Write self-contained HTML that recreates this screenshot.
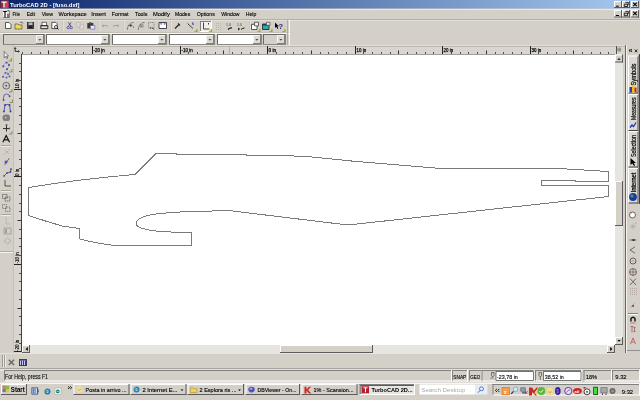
<!DOCTYPE html>
<html><head><meta charset="utf-8">
<style>
html,body{margin:0;padding:0;width:640px;height:400px;overflow:hidden;background:#D4D0C8}
svg{display:block;will-change:transform;font-family:"Liberation Sans",sans-serif}
</style></head><body>
<svg width="640" height="400" viewBox="0 0 640 400">
<rect x="0" y="0" width="640" height="400" fill="#D4D0C8" />
<defs><linearGradient id="tg" x1="0" x2="1" y1="0" y2="0"><stop offset="0" stop-color="#0A246A"/><stop offset="1" stop-color="#A6CAF0"/></linearGradient></defs>
<rect x="0" y="0" width="640" height="8.5" fill="url(#tg)" />
<rect x="0" y="9" width="640" height="1" fill="#E8E8EC"/>
<rect x="0.5" y="0.5" width="8" height="7.5" fill="#A02838" />
<rect x="5" y="1" width="3.5" height="7" fill="#D04050" />
<path d="M1.5 2.2h5M4 2.2v5.3" stroke="#fff" fill="none" stroke-width="1.3" />
<text x="10" y="6.8" font-size="6.2" fill="#fff" font-weight="bold" textLength="69.5" lengthAdjust="spacingAndGlyphs" >TurboCAD 2D - [fuso.dxf]</text>
<rect x="614" y="1" width="8" height="7" fill="#D4D0C8" />
<rect x="614" y="1" width="8" height="1" fill="#FFFFFF"/>
<rect x="614" y="1" width="1" height="7" fill="#FFFFFF"/>
<rect x="614" y="7" width="8" height="1" fill="#5C5C5C"/>
<rect x="621" y="1" width="1" height="7" fill="#5C5C5C"/>
<rect x="622" y="1" width="8" height="7" fill="#D4D0C8" />
<rect x="622" y="1" width="8" height="1" fill="#FFFFFF"/>
<rect x="622" y="1" width="1" height="7" fill="#FFFFFF"/>
<rect x="622" y="7" width="8" height="1" fill="#5C5C5C"/>
<rect x="629" y="1" width="1" height="7" fill="#5C5C5C"/>
<rect x="631" y="1" width="8" height="7" fill="#D4D0C8" />
<rect x="631" y="1" width="8" height="1" fill="#FFFFFF"/>
<rect x="631" y="1" width="1" height="7" fill="#FFFFFF"/>
<rect x="631" y="7" width="8" height="1" fill="#5C5C5C"/>
<rect x="638" y="1" width="1" height="7" fill="#5C5C5C"/>
<path d="M615.8 6.2h3" stroke="#000" fill="none" stroke-width="1" />
<path d="M624.3 4.2h3.2v2.3h-3.2z M625.3 2.3h3v2.5" stroke="#000" fill="none" stroke-width="0.8" />
<path d="M633.2 2.6l3.6 3.6M636.8 2.6l-3.6 3.6" stroke="#000" fill="none" stroke-width="1.1" />
<rect x="3" y="10.5" width="6.5" height="7" fill="#F8F8F8" />
<path d="M3 17.5h6.5v-7" stroke="#404040" fill="none" stroke-width="0.6" />
<path d="M3.2 11.5h3.6M5 11.5v6" stroke="#000" fill="none" stroke-width="1.1" />
<path d="M8 13.5v4" stroke="#000" fill="none" stroke-width="1" />
<rect x="7.5" y="10.3" width="1.2" height="1.2" fill="#000" />
<text x="12.5" y="15.8" font-size="5.6" fill="#000" font-weight="normal" textLength="7.5" lengthAdjust="spacingAndGlyphs" stroke="#000" stroke-width="0.12" >File</text>
<text x="26.7" y="15.8" font-size="5.6" fill="#000" font-weight="normal" textLength="8.3" lengthAdjust="spacingAndGlyphs" stroke="#000" stroke-width="0.12" >Edit</text>
<text x="41.7" y="15.8" font-size="5.6" fill="#000" font-weight="normal" textLength="11.3" lengthAdjust="spacingAndGlyphs" stroke="#000" stroke-width="0.12" >View</text>
<text x="58.6" y="15.8" font-size="5.6" fill="#000" font-weight="normal" textLength="28" lengthAdjust="spacingAndGlyphs" stroke="#000" stroke-width="0.12" >Workspace</text>
<text x="91.2" y="15.8" font-size="5.6" fill="#000" font-weight="normal" textLength="14.8" lengthAdjust="spacingAndGlyphs" stroke="#000" stroke-width="0.12" >Insert</text>
<text x="111.7" y="15.8" font-size="5.6" fill="#000" font-weight="normal" textLength="16.8" lengthAdjust="spacingAndGlyphs" stroke="#000" stroke-width="0.12" >Format</text>
<text x="135" y="15.8" font-size="5.6" fill="#000" font-weight="normal" textLength="12.4" lengthAdjust="spacingAndGlyphs" stroke="#000" stroke-width="0.12" >Tools</text>
<text x="153" y="15.8" font-size="5.6" fill="#000" font-weight="normal" textLength="16.8" lengthAdjust="spacingAndGlyphs" stroke="#000" stroke-width="0.12" >Modify</text>
<text x="174.9" y="15.8" font-size="5.6" fill="#000" font-weight="normal" textLength="15.4" lengthAdjust="spacingAndGlyphs" stroke="#000" stroke-width="0.12" >Modes</text>
<text x="196.8" y="15.8" font-size="5.6" fill="#000" font-weight="normal" textLength="18" lengthAdjust="spacingAndGlyphs" stroke="#000" stroke-width="0.12" >Options</text>
<text x="221.2" y="15.8" font-size="5.6" fill="#000" font-weight="normal" textLength="18.3" lengthAdjust="spacingAndGlyphs" stroke="#000" stroke-width="0.12" >Window</text>
<text x="245.7" y="15.8" font-size="5.6" fill="#000" font-weight="normal" textLength="10.6" lengthAdjust="spacingAndGlyphs" stroke="#000" stroke-width="0.12" >Help</text>
<rect x="614" y="10" width="8" height="7.5" fill="#D4D0C8" />
<rect x="614" y="10" width="8" height="1" fill="#FFFFFF"/>
<rect x="614" y="10" width="1" height="7.5" fill="#FFFFFF"/>
<rect x="614" y="16.5" width="8" height="1" fill="#5C5C5C"/>
<rect x="621" y="10" width="1" height="7.5" fill="#5C5C5C"/>
<rect x="622" y="10" width="8" height="7.5" fill="#D4D0C8" />
<rect x="622" y="10" width="8" height="1" fill="#FFFFFF"/>
<rect x="622" y="10" width="1" height="7.5" fill="#FFFFFF"/>
<rect x="622" y="16.5" width="8" height="1" fill="#5C5C5C"/>
<rect x="629" y="10" width="1" height="7.5" fill="#5C5C5C"/>
<rect x="631" y="10" width="8" height="7.5" fill="#D4D0C8" />
<rect x="631" y="10" width="8" height="1" fill="#FFFFFF"/>
<rect x="631" y="10" width="1" height="7.5" fill="#FFFFFF"/>
<rect x="631" y="16.5" width="8" height="1" fill="#5C5C5C"/>
<rect x="638" y="10" width="1" height="7.5" fill="#5C5C5C"/>
<path d="M615.8 15.5h3.2" stroke="#000" fill="none" stroke-width="1" />
<path d="M624.3 13.2h3.2v2.5h-3.2z M625.3 11.3h3v2.5" stroke="#000" fill="none" stroke-width="0.8" />
<path d="M633.2 11.6l3.6 3.6M636.8 11.6l-3.6 3.6" stroke="#000" fill="none" stroke-width="1.1" />
<rect x="0" y="19" width="640" height="1" fill="#B4B0A8"/>
<rect x="0" y="20" width="640" height="1" fill="#E2E0DA"/>
<rect x="37" y="21" width="1" height="10" fill="#CBC7BF"/>
<rect x="38" y="21" width="1" height="10" fill="#E2E0DA"/>
<rect x="62" y="21" width="1" height="10" fill="#CBC7BF"/>
<rect x="63" y="21" width="1" height="10" fill="#E2E0DA"/>
<rect x="98.5" y="21" width="1" height="10" fill="#CBC7BF"/>
<rect x="99.5" y="21" width="1" height="10" fill="#E2E0DA"/>
<rect x="123" y="21" width="1" height="10" fill="#CBC7BF"/>
<rect x="124" y="21" width="1" height="10" fill="#E2E0DA"/>
<rect x="170" y="21" width="1" height="10" fill="#CBC7BF"/>
<rect x="171" y="21" width="1" height="10" fill="#E2E0DA"/>
<rect x="249" y="21" width="1" height="10" fill="#CBC7BF"/>
<rect x="250" y="21" width="1" height="10" fill="#E2E0DA"/>
<path d="M5.5 22.5h3.5l2 2v4h-5.5z" stroke="#333" fill="#fff" stroke-width="0.8" />
<path d="M15 24h3l1 1h3v4h-7z" stroke="#665500" fill="#E8D870" stroke-width="0.7" />
<path d="M20 22.5l2 -0.5 1 1.5" stroke="#333" fill="none" stroke-width="0.6" />
<rect x="27" y="22" width="7" height="7" fill="#3A3A3A" />
<rect x="28.5" y="22.5" width="4" height="2.5" fill="#bbb" />
<rect x="29.5" y="26.5" width="2" height="1.5" fill="#000" />
<rect x="42" y="22.3" width="4.5" height="3" fill="#fff" />
<path d="M42 25.3v-3h4.5v3" stroke="#303030" fill="none" stroke-width="0.7" />
<path d="M40.8 25.5h7v3.2h-7z" stroke="#202020" fill="#B0B0B0" stroke-width="0.9" />
<rect x="41.5" y="27" width="5.6" height="0.8" fill="#F0F0F0" />
<path d="M51.8 22.3h4l1.3 1.3v5h-5.3z" stroke="#303030" fill="#fff" stroke-width="0.8" />
<circle cx="56" cy="27" r="1.5" fill="#fff" stroke="#202020" stroke-width="0.8"/>
<path d="M57.1 28.2l1.3 1.2" stroke="#000" fill="none" stroke-width="1" />
<path d="M68.3 22.3l2.6 3.8M71.1 22.3l-2.6 3.8" stroke="#303040" fill="none" stroke-width="0.7" />
<circle cx="68.2" cy="27.6" r="1.2" fill="none" stroke="#5048A8" stroke-width="0.9"/><circle cx="71.2" cy="27.6" r="1.2" fill="none" stroke="#5048A8" stroke-width="0.9"/>
<path d="M76.8 22.5h3.5v4.5h-3.5zM79.8 24.3h3.5v4.7h-3.5z" stroke="#B8B4AC" fill="#E0DED8" stroke-width="0.7" />
<path d="M87.3 23h6v5.5h-6z" stroke="none" fill="#3A3830" stroke-width="1" />
<rect x="89" y="22.2" width="2.6" height="1.3" fill="#606058" />
<rect x="90.3" y="25.5" width="4.5" height="3.7" fill="#E8E8F8" />
<path d="M90.3 25.5h4.5v3.7h-4.5z" stroke="#5858A8" fill="none" stroke-width="0.6" />
<path d="M101.8 25.8l1.8 -1.6v3.2z" stroke="none" fill="#A09C94" stroke-width="1" />
<path d="M103.3 25.8q3 -1.4 4.8 0.8" stroke="#A09C94" fill="none" stroke-width="0.9" />
<path d="M119.2 25.8l-1.8 -1.6v3.2z" stroke="none" fill="#A09C94" stroke-width="1" />
<path d="M117.7 25.8q-3 -1.4 -4.8 0.8" stroke="#A09C94" fill="none" stroke-width="0.9" />
<path d="M127.3 29.5q0.8 -6.5 6 -7" stroke="#202020" fill="none" stroke-width="0.8" stroke-dasharray="1 0.8"/>
<path d="M129.3 25.5h3M130.8 24v3" stroke="#202020" fill="none" stroke-width="0.7" />
<rect x="133" y="26.5" width="1" height="1" fill="#404040" />
<path d="M138.3 29.5q0.8 -6.5 6 -7" stroke="#202020" fill="none" stroke-width="0.8" stroke-dasharray="1 0.8"/>
<path d="M140 25h3.5M140 26.8h3.5" stroke="#303030" fill="none" stroke-width="0.6" />
<path d="M148.5 22.5h5.5v5.5h-5.5z" stroke="#606060" fill="none" stroke-width="0.6" stroke-dasharray="1 0.7"/>
<path d="M152 27.5l2 2" stroke="#111" fill="none" stroke-width="0.9" />
<rect x="150" y="27.5" width="1" height="1" fill="#303030" />
<rect x="159" y="22.5" width="7.5" height="6" fill="#fff" />
<path d="M159 22.5h7.5v6h-7.5z" stroke="#303040" fill="none" stroke-width="0.9" />
<path d="M160 23.5l1.2 1.2 1.2 -1.2zM163.5 23.5l1.2 1.2 1.2 -1.2z" stroke="none" fill="#202030" stroke-width="1" />
<path d="M175 28.5l4.5 -4.5M178 23.5l2 2" stroke="#222" fill="none" stroke-width="1.1" />
<path d="M187.5 23.5l5.5 5" stroke="#333" fill="none" stroke-width="0.9" />
<path d="M192.5 22.5l0.8 2.5" stroke="#4848A0" fill="none" stroke-width="1.2" />
<path d="M197 29v3h-3z" stroke="none" fill="#D8D050" stroke-width="1" />
<path d="M197 29v3h-3" stroke="#505030" fill="none" stroke-width="0.5" />
<rect x="200" y="21" width="12" height="11" fill="#F0EFEA" />
<rect x="200" y="21" width="12" height="1" fill="#808080"/>
<rect x="200" y="21" width="1" height="11" fill="#808080"/>
<rect x="200" y="31" width="12" height="1" fill="#FFFFFF"/>
<rect x="211" y="21" width="1" height="11" fill="#FFFFFF"/>
<path d="M203.5 22.5v6.5h6" stroke="#333" fill="none" stroke-width="0.9" />
<rect x="208" y="23" width="1" height="1.5" fill="#333" />
<path d="M211.5 29v3h-3z" stroke="none" fill="#D8D050" stroke-width="1" />
<path d="M211.5 29v3h-3" stroke="#505030" fill="none" stroke-width="0.5" />
<rect x="216" y="23" width="1" height="1" fill="#B0B0C8" />
<rect x="216" y="25" width="1" height="1" fill="#B0B0C8" />
<rect x="216" y="27" width="1" height="1" fill="#B0B0C8" />
<rect x="216" y="29" width="1" height="1" fill="#B0B0C8" />
<rect x="218" y="23" width="1" height="1" fill="#B0B0C8" />
<rect x="218" y="25" width="1" height="1" fill="#B0B0C8" />
<rect x="218" y="27" width="1" height="1" fill="#B0B0C8" />
<rect x="218" y="29" width="1" height="1" fill="#B0B0C8" />
<rect x="220" y="23" width="1" height="1" fill="#B0B0C8" />
<rect x="220" y="25" width="1" height="1" fill="#B0B0C8" />
<rect x="220" y="27" width="1" height="1" fill="#B0B0C8" />
<rect x="220" y="29" width="1" height="1" fill="#B0B0C8" />
<text x="226" y="25.5" font-size="3.5" fill="#777" font-weight="normal" stroke="#777" stroke-width="0.12" >1.0</text>
<path d="M228 29.5q2 -2 4 -1.5" stroke="#111" fill="none" stroke-width="1.1" />
<text x="237" y="25.5" font-size="3.5" fill="#777" font-weight="normal" stroke="#777" stroke-width="0.12" >1.0</text>
<path d="M238 28l1.5 1 -1.5 1M241 29.5q1.5 -1.5 3.5 -1.5" stroke="#111" fill="none" stroke-width="1" />
<path d="M251.5 24.3h5.5v5.2h-5.5z" stroke="#303030" fill="#fff" stroke-width="0.8" />
<path d="M254.5 22.3h4v3.6h-4z" stroke="#303030" fill="#F4F4F4" stroke-width="0.7" />
<path d="M260 29v3h-3z" stroke="none" fill="#D8D050" stroke-width="1" />
<path d="M260 29v3h-3" stroke="#505030" fill="none" stroke-width="0.5" />
<path d="M262.5 24h6.5v5.5h-6.5z" stroke="#203038" fill="#30A8A8" stroke-width="0.9" />
<rect x="263" y="24.3" width="5.5" height="1.2" fill="#203038" />
<path d="M266.5 22.3h3.5v3h-3.5z" stroke="#303030" fill="#E8F0F0" stroke-width="0.6" />
<path d="M272 29v3h-3z" stroke="none" fill="#D8D050" stroke-width="1" />
<path d="M272 29v3h-3" stroke="#505030" fill="none" stroke-width="0.5" />
<path d="M275 22.5v5.5l1.3 -1.2 1.2 2.2 0.8 -0.5 -1.1 -2 1.8 0z" stroke="none" fill="#000" stroke-width="1" />
<text x="278.6" y="28.6" font-size="7.5" fill="#202090" font-weight="bold" >?</text>
<path d="M285 29v3h-3z" stroke="none" fill="#D8D050" stroke-width="1" />
<path d="M285 29v3h-3" stroke="#505030" fill="none" stroke-width="0.5" />
<rect x="0" y="32" width="289" height="1" fill="#C4C0B8"/>
<rect x="0" y="33" width="289" height="1" fill="#F6F5F2"/>
<rect x="287" y="20" width="1" height="25" fill="#B0ACA4"/>
<rect x="289" y="20" width="1" height="25" fill="#F6F5F2"/>
<rect x="3" y="34" width="42" height="11" fill="#D4D0C8" />
<rect x="3" y="34" width="42" height="1" fill="#6A6864"/>
<rect x="3" y="34" width="1" height="11" fill="#6A6864"/>
<rect x="3" y="44" width="42" height="1" fill="#8A8884"/>
<rect x="44" y="34" width="1" height="11" fill="#8A8884"/>
<rect x="36" y="35" width="8" height="9" fill="#DDDAD4" />
<rect x="36" y="35" width="8" height="1" fill="#F4F4F0"/>
<rect x="36" y="35" width="1" height="9" fill="#F4F4F0"/>
<rect x="36" y="43" width="8" height="1" fill="#808080"/>
<rect x="43" y="35" width="1" height="9" fill="#808080"/>
<path d="M38.3 39h3.2l-1.6 1.7z" stroke="none" fill="#505050" stroke-width="1" />
<rect x="46" y="34" width="64" height="11" fill="#fff" />
<rect x="46" y="34" width="64" height="1" fill="#6A6864"/>
<rect x="46" y="34" width="1" height="11" fill="#6A6864"/>
<rect x="46" y="44" width="64" height="1" fill="#8A8884"/>
<rect x="109" y="34" width="1" height="11" fill="#8A8884"/>
<rect x="101" y="35" width="8" height="9" fill="#DDDAD4" />
<rect x="101" y="35" width="8" height="1" fill="#F4F4F0"/>
<rect x="101" y="35" width="1" height="9" fill="#F4F4F0"/>
<rect x="101" y="43" width="8" height="1" fill="#808080"/>
<rect x="108" y="35" width="1" height="9" fill="#808080"/>
<path d="M103.3 39h3.2l-1.6 1.7z" stroke="none" fill="#505050" stroke-width="1" />
<rect x="112" y="34" width="55" height="11" fill="#fff" />
<rect x="112" y="34" width="55" height="1" fill="#6A6864"/>
<rect x="112" y="34" width="1" height="11" fill="#6A6864"/>
<rect x="112" y="44" width="55" height="1" fill="#8A8884"/>
<rect x="166" y="34" width="1" height="11" fill="#8A8884"/>
<rect x="158" y="35" width="8" height="9" fill="#DDDAD4" />
<rect x="158" y="35" width="8" height="1" fill="#F4F4F0"/>
<rect x="158" y="35" width="1" height="9" fill="#F4F4F0"/>
<rect x="158" y="43" width="8" height="1" fill="#808080"/>
<rect x="165" y="35" width="1" height="9" fill="#808080"/>
<path d="M160.3 39h3.2l-1.6 1.7z" stroke="none" fill="#505050" stroke-width="1" />
<rect x="169" y="34" width="46" height="11" fill="#fff" />
<rect x="169" y="34" width="46" height="1" fill="#6A6864"/>
<rect x="169" y="34" width="1" height="11" fill="#6A6864"/>
<rect x="169" y="44" width="46" height="1" fill="#8A8884"/>
<rect x="214" y="34" width="1" height="11" fill="#8A8884"/>
<rect x="206" y="35" width="8" height="9" fill="#DDDAD4" />
<rect x="206" y="35" width="8" height="1" fill="#F4F4F0"/>
<rect x="206" y="35" width="1" height="9" fill="#F4F4F0"/>
<rect x="206" y="43" width="8" height="1" fill="#808080"/>
<rect x="213" y="35" width="1" height="9" fill="#808080"/>
<path d="M208.3 39h3.2l-1.6 1.7z" stroke="none" fill="#505050" stroke-width="1" />
<rect x="217" y="34" width="45" height="11" fill="#fff" />
<rect x="217" y="34" width="45" height="1" fill="#6A6864"/>
<rect x="217" y="34" width="1" height="11" fill="#6A6864"/>
<rect x="217" y="44" width="45" height="1" fill="#8A8884"/>
<rect x="261" y="34" width="1" height="11" fill="#8A8884"/>
<rect x="253" y="35" width="8" height="9" fill="#DDDAD4" />
<rect x="253" y="35" width="8" height="1" fill="#F4F4F0"/>
<rect x="253" y="35" width="1" height="9" fill="#F4F4F0"/>
<rect x="253" y="43" width="8" height="1" fill="#808080"/>
<rect x="260" y="35" width="1" height="9" fill="#808080"/>
<path d="M255.3 39h3.2l-1.6 1.7z" stroke="none" fill="#505050" stroke-width="1" />
<rect x="263" y="34" width="23" height="11" fill="#D4D0C8" />
<rect x="263" y="34" width="23" height="1" fill="#6A6864"/>
<rect x="263" y="34" width="1" height="11" fill="#6A6864"/>
<rect x="263" y="44" width="23" height="1" fill="#8A8884"/>
<rect x="285" y="34" width="1" height="11" fill="#8A8884"/>
<rect x="277" y="35" width="8" height="9" fill="#DDDAD4" />
<rect x="277" y="35" width="8" height="1" fill="#F4F4F0"/>
<rect x="277" y="35" width="1" height="9" fill="#F4F4F0"/>
<rect x="277" y="43" width="8" height="1" fill="#808080"/>
<rect x="284" y="35" width="1" height="9" fill="#808080"/>
<path d="M279.3 39h3.2l-1.6 1.7z" stroke="none" fill="#505050" stroke-width="1" />
<rect x="13" y="46" width="611" height="8.5" fill="#D9D6CF" />
<rect x="13" y="45" width="612" height="1" fill="#E2E0DA"/>
<rect x="13" y="46" width="612" height="1" fill="#BCB8B0"/>
<path d="M15.2 47.8v3.6h3.6" stroke="#000" fill="none" stroke-width="0.8" />
<path d="M14.3 48.8l0.9 -1.2 0.9 1.2M18.2 50.5l1.2 0.9 -1.2 0.9" stroke="#000" fill="none" stroke-width="0.7" />
<rect x="14" y="54" width="7" height="297.5" fill="#D9D6CF" />
<rect x="21" y="54" width="595" height="1" fill="#404040"/>
<rect x="21" y="54" width="1" height="298" fill="#404040"/>
<rect x="22" y="52" width="1" height="2" fill="#505050"/>
<rect x="31" y="52" width="1" height="2" fill="#505050"/>
<rect x="40" y="52" width="1" height="2" fill="#505050"/>
<rect x="48" y="50.5" width="1" height="3.5" fill="#333"/>
<rect x="57" y="52" width="1" height="2" fill="#505050"/>
<rect x="66" y="52" width="1" height="2" fill="#505050"/>
<rect x="75" y="52" width="1" height="2" fill="#505050"/>
<rect x="83" y="52" width="1" height="2" fill="#505050"/>
<rect x="92" y="46" width="1" height="8" fill="#222"/>
<text x="93.6" y="51.6" font-size="4.9" fill="#000" font-weight="normal" textLength="11.0" lengthAdjust="spacingAndGlyphs" stroke="#000" stroke-width="0.25" >-20 in</text>
<rect x="101" y="52" width="1" height="2" fill="#505050"/>
<rect x="110" y="52" width="1" height="2" fill="#505050"/>
<rect x="118" y="52" width="1" height="2" fill="#505050"/>
<rect x="127" y="52" width="1" height="2" fill="#505050"/>
<rect x="136" y="50.5" width="1" height="3.5" fill="#333"/>
<rect x="145" y="52" width="1" height="2" fill="#505050"/>
<rect x="153" y="52" width="1" height="2" fill="#505050"/>
<rect x="162" y="52" width="1" height="2" fill="#505050"/>
<rect x="171" y="52" width="1" height="2" fill="#505050"/>
<rect x="180" y="46" width="1" height="8" fill="#222"/>
<text x="181.6" y="51.6" font-size="4.9" fill="#000" font-weight="normal" textLength="11.0" lengthAdjust="spacingAndGlyphs" stroke="#000" stroke-width="0.25" >-10 in</text>
<rect x="188" y="52" width="1" height="2" fill="#505050"/>
<rect x="197" y="52" width="1" height="2" fill="#505050"/>
<rect x="206" y="52" width="1" height="2" fill="#505050"/>
<rect x="215" y="52" width="1" height="2" fill="#505050"/>
<rect x="223" y="50.5" width="1" height="3.5" fill="#333"/>
<rect x="232" y="52" width="1" height="2" fill="#505050"/>
<rect x="241" y="52" width="1" height="2" fill="#505050"/>
<rect x="250" y="52" width="1" height="2" fill="#505050"/>
<rect x="258" y="52" width="1" height="2" fill="#505050"/>
<rect x="267" y="46" width="1" height="8" fill="#222"/>
<text x="268.6" y="51.6" font-size="4.9" fill="#000" font-weight="normal" textLength="7.5" lengthAdjust="spacingAndGlyphs" stroke="#000" stroke-width="0.25" >0 in</text>
<rect x="276" y="52" width="1" height="2" fill="#505050"/>
<rect x="285" y="52" width="1" height="2" fill="#505050"/>
<rect x="293" y="52" width="1" height="2" fill="#505050"/>
<rect x="302" y="52" width="1" height="2" fill="#505050"/>
<rect x="311" y="50.5" width="1" height="3.5" fill="#333"/>
<rect x="320" y="52" width="1" height="2" fill="#505050"/>
<rect x="328" y="52" width="1" height="2" fill="#505050"/>
<rect x="337" y="52" width="1" height="2" fill="#505050"/>
<rect x="346" y="52" width="1" height="2" fill="#505050"/>
<rect x="355" y="46" width="1" height="8" fill="#222"/>
<text x="356.6" y="51.6" font-size="4.9" fill="#000" font-weight="normal" textLength="9.5" lengthAdjust="spacingAndGlyphs" stroke="#000" stroke-width="0.25" >10 in</text>
<rect x="363" y="52" width="1" height="2" fill="#505050"/>
<rect x="372" y="52" width="1" height="2" fill="#505050"/>
<rect x="381" y="52" width="1" height="2" fill="#505050"/>
<rect x="390" y="52" width="1" height="2" fill="#505050"/>
<rect x="398" y="50.5" width="1" height="3.5" fill="#333"/>
<rect x="407" y="52" width="1" height="2" fill="#505050"/>
<rect x="416" y="52" width="1" height="2" fill="#505050"/>
<rect x="425" y="52" width="1" height="2" fill="#505050"/>
<rect x="433" y="52" width="1" height="2" fill="#505050"/>
<rect x="442" y="46" width="1" height="8" fill="#222"/>
<text x="443.6" y="51.6" font-size="4.9" fill="#000" font-weight="normal" textLength="9.5" lengthAdjust="spacingAndGlyphs" stroke="#000" stroke-width="0.25" >20 in</text>
<rect x="451" y="52" width="1" height="2" fill="#505050"/>
<rect x="460" y="52" width="1" height="2" fill="#505050"/>
<rect x="468" y="52" width="1" height="2" fill="#505050"/>
<rect x="477" y="52" width="1" height="2" fill="#505050"/>
<rect x="486" y="50.5" width="1" height="3.5" fill="#333"/>
<rect x="495" y="52" width="1" height="2" fill="#505050"/>
<rect x="503" y="52" width="1" height="2" fill="#505050"/>
<rect x="512" y="52" width="1" height="2" fill="#505050"/>
<rect x="521" y="52" width="1" height="2" fill="#505050"/>
<rect x="530" y="46" width="1" height="8" fill="#222"/>
<text x="531.6" y="51.6" font-size="4.9" fill="#000" font-weight="normal" textLength="9.5" lengthAdjust="spacingAndGlyphs" stroke="#000" stroke-width="0.25" >30 in</text>
<rect x="538" y="52" width="1" height="2" fill="#505050"/>
<rect x="547" y="52" width="1" height="2" fill="#505050"/>
<rect x="556" y="52" width="1" height="2" fill="#505050"/>
<rect x="565" y="52" width="1" height="2" fill="#505050"/>
<rect x="573" y="50.5" width="1" height="3.5" fill="#333"/>
<rect x="582" y="52" width="1" height="2" fill="#505050"/>
<rect x="591" y="52" width="1" height="2" fill="#505050"/>
<rect x="600" y="52" width="1" height="2" fill="#505050"/>
<rect x="608" y="52" width="1" height="2" fill="#505050"/>
<rect x="229" y="46" width="1" height="8" fill="#E89A9A"/>
<rect x="616" y="46" width="1" height="8.5" fill="#505050"/>
<path d="M617.8 48h2.8v3.2h-2.8zM619.2 48v3.2M617.8 49.6h2.8" stroke="#606060" fill="none" stroke-width="0.5" />
<rect x="14" y="351" width="7" height="1" fill="#222"/>
<text x="0" y="0" font-size="4.5" fill="#000" stroke="#000" stroke-width="0.15" transform="translate(19 350.9) rotate(-90)">-20 in</text>
<rect x="19" y="343" width="2" height="1" fill="#505050"/>
<rect x="19" y="334" width="2" height="1" fill="#505050"/>
<rect x="19" y="325" width="2" height="1" fill="#505050"/>
<rect x="19" y="316" width="2" height="1" fill="#505050"/>
<rect x="17.5" y="308" width="3.5" height="1" fill="#333"/>
<rect x="19" y="299" width="2" height="1" fill="#505050"/>
<rect x="19" y="290" width="2" height="1" fill="#505050"/>
<rect x="19" y="281" width="2" height="1" fill="#505050"/>
<rect x="19" y="273" width="2" height="1" fill="#505050"/>
<rect x="14" y="264" width="7" height="1" fill="#222"/>
<text x="0" y="0" font-size="4.5" fill="#000" stroke="#000" stroke-width="0.15" transform="translate(19 263.4) rotate(-90)">-10 in</text>
<rect x="19" y="255" width="2" height="1" fill="#505050"/>
<rect x="19" y="246" width="2" height="1" fill="#505050"/>
<rect x="19" y="238" width="2" height="1" fill="#505050"/>
<rect x="19" y="229" width="2" height="1" fill="#505050"/>
<rect x="17.5" y="220" width="3.5" height="1" fill="#333"/>
<rect x="19" y="211" width="2" height="1" fill="#505050"/>
<rect x="19" y="203" width="2" height="1" fill="#505050"/>
<rect x="19" y="194" width="2" height="1" fill="#505050"/>
<rect x="19" y="185" width="2" height="1" fill="#505050"/>
<rect x="14" y="176" width="7" height="1" fill="#222"/>
<text x="0" y="0" font-size="4.5" fill="#000" stroke="#000" stroke-width="0.15" transform="translate(19 175.9) rotate(-90)">0 in</text>
<rect x="19" y="168" width="2" height="1" fill="#505050"/>
<rect x="19" y="159" width="2" height="1" fill="#505050"/>
<rect x="19" y="150" width="2" height="1" fill="#505050"/>
<rect x="19" y="141" width="2" height="1" fill="#505050"/>
<rect x="17.5" y="133" width="3.5" height="1" fill="#333"/>
<rect x="19" y="124" width="2" height="1" fill="#505050"/>
<rect x="19" y="115" width="2" height="1" fill="#505050"/>
<rect x="19" y="106" width="2" height="1" fill="#505050"/>
<rect x="19" y="98" width="2" height="1" fill="#505050"/>
<rect x="14" y="89" width="7" height="1" fill="#222"/>
<text x="0" y="0" font-size="4.5" fill="#000" stroke="#000" stroke-width="0.15" transform="translate(19 88.4) rotate(-90)">10 in</text>
<rect x="19" y="80" width="2" height="1" fill="#505050"/>
<rect x="19" y="71" width="2" height="1" fill="#505050"/>
<rect x="19" y="63" width="2" height="1" fill="#505050"/>
<rect x="22" y="54.5" width="593" height="290.5" fill="#FFFFFF" />
<path d="M28.5 187.5 L28.5 215.5 Q45 221 62 226 L79.5 228.5 L79.5 239 Q95 243 115 245.5 L191.5 245.5 L191.5 233 L160 231.5 Q136 229 136 223.5 Q137 216 160 213.5 Q190 210.5 232.5 211 L348 225 L608.5 196.5 L608.5 185.5 L541.5 185.5 L541.5 180.5 L575 180.5 L575.5 181.5 L608.5 181.5 L608.5 171.5 L559 168.5 L436 168.5 L435.5 168.05 L352 161.05 L303 156.1 L247 155.5 L246.5 154.5 L177 154.5 L176.5 153.5 L156 153.5 L135 174.5 Q80 179 28.5 187.5 Z" stroke="#7A7A7A" fill="none" stroke-width="1" shape-rendering="crispEdges"/>
<rect x="615" y="54.5" width="8" height="290.5" fill="#E6E5E1" />
<rect x="615" y="54.5" width="8" height="8" fill="#D4D0C8" />
<rect x="615" y="54.5" width="8" height="1" fill="#FFFFFF"/>
<rect x="615" y="54.5" width="1" height="8.0" fill="#FFFFFF"/>
<rect x="615" y="61.5" width="8" height="1" fill="#5C5C5C"/>
<rect x="622" y="54.5" width="1" height="8.0" fill="#5C5C5C"/>
<path d="M617.3 59.8h3.4l-1.7 -1.8z" stroke="none" fill="#000" stroke-width="1" />
<rect x="615" y="181" width="8" height="45" fill="#D4D0C8" />
<rect x="615" y="181" width="8" height="1" fill="#FFFFFF"/>
<rect x="615" y="181" width="1" height="45" fill="#FFFFFF"/>
<rect x="615" y="225" width="8" height="1" fill="#5C5C5C"/>
<rect x="622" y="181" width="1" height="45" fill="#5C5C5C"/>
<rect x="615" y="337" width="8" height="8" fill="#D4D0C8" />
<rect x="615" y="337" width="8" height="1" fill="#FFFFFF"/>
<rect x="615" y="337" width="1" height="8" fill="#FFFFFF"/>
<rect x="615" y="344" width="8" height="1" fill="#5C5C5C"/>
<rect x="622" y="337" width="1" height="8" fill="#5C5C5C"/>
<path d="M617.3 340h3.4l-1.7 1.8z" stroke="none" fill="#000" stroke-width="1" />
<rect x="22" y="345" width="593" height="8" fill="#E6E5E1" />
<rect x="22" y="345" width="8" height="8" fill="#D4D0C8" />
<rect x="22" y="345" width="8" height="1" fill="#FFFFFF"/>
<rect x="22" y="345" width="1" height="8" fill="#FFFFFF"/>
<rect x="22" y="352" width="8" height="1" fill="#5C5C5C"/>
<rect x="29" y="345" width="1" height="8" fill="#5C5C5C"/>
<path d="M27.8 347l-2.2 2 2.2 2z" stroke="none" fill="#000" stroke-width="1" />
<rect x="280" y="345" width="93" height="8" fill="#D4D0C8" />
<rect x="280" y="345" width="93" height="1" fill="#FFFFFF"/>
<rect x="280" y="345" width="1" height="8" fill="#FFFFFF"/>
<rect x="280" y="352" width="93" height="1" fill="#5C5C5C"/>
<rect x="372" y="345" width="1" height="8" fill="#5C5C5C"/>
<rect x="607" y="345" width="8" height="8" fill="#D4D0C8" />
<rect x="607" y="345" width="8" height="1" fill="#FFFFFF"/>
<rect x="607" y="345" width="1" height="8" fill="#FFFFFF"/>
<rect x="607" y="352" width="8" height="1" fill="#5C5C5C"/>
<rect x="614" y="345" width="1" height="8" fill="#5C5C5C"/>
<path d="M610.2 347l2.2 2 -2.2 2z" stroke="none" fill="#000" stroke-width="1" />
<rect x="615" y="345" width="8" height="8" fill="#D4D0C8" />
<rect x="625" y="45" width="1" height="308" fill="#6A6864"/>
<rect x="626" y="45" width="1" height="308" fill="#F4F2EE"/>
<text x="628.8" y="52.8" font-size="6.5" fill="#000" font-weight="bold" >«</text>
<path d="M634.8 49.5l2.6 2.8M637.4 49.5l-2.6 2.8" stroke="#000" fill="none" stroke-width="0.8" />
<rect x="628" y="55.5" width="10" height="38.0" fill="#DCD9D2" />
<rect x="628" y="55.5" width="1" height="38.0" fill="#FFFFFF"/>
<rect x="637.5" y="55.5" width="1" height="38.0" fill="#505050"/>
<rect x="628" y="55.5" width="10" height="1" fill="#FFFFFF"/>
<rect x="628.5" y="92.5" width="9.5" height="1" fill="#404040"/>
<text x="0" y="0" font-size="6.6" fill="#000" stroke="#000" stroke-width="0.2" transform="translate(636.3 85.5) rotate(-90)" textLength="22.0" lengthAdjust="spacingAndGlyphs">Symbols</text>
<rect x="628" y="94" width="10" height="37" fill="#DCD9D2" />
<rect x="628" y="94" width="1" height="37" fill="#FFFFFF"/>
<rect x="637.5" y="94" width="1" height="37" fill="#505050"/>
<rect x="628" y="94" width="10" height="1" fill="#FFFFFF"/>
<rect x="628.5" y="130" width="9.5" height="1" fill="#404040"/>
<text x="0" y="0" font-size="6.6" fill="#000" stroke="#000" stroke-width="0.2" transform="translate(636.3 120) rotate(-90)" textLength="22.5" lengthAdjust="spacingAndGlyphs">Measures</text>
<rect x="628" y="131" width="10" height="36.5" fill="#DCD9D2" />
<rect x="628" y="131" width="1" height="36.5" fill="#FFFFFF"/>
<rect x="637.5" y="131" width="1" height="36.5" fill="#505050"/>
<rect x="628" y="131" width="10" height="1" fill="#FFFFFF"/>
<rect x="628.5" y="166.5" width="9.5" height="1" fill="#404040"/>
<text x="0" y="0" font-size="6.6" fill="#000" stroke="#000" stroke-width="0.2" transform="translate(636.3 157) rotate(-90)" textLength="22" lengthAdjust="spacingAndGlyphs">Selection</text>
<rect x="628" y="168" width="10" height="35.5" fill="#DCD9D2" />
<rect x="628" y="168" width="1" height="35.5" fill="#FFFFFF"/>
<rect x="637.5" y="168" width="1" height="35.5" fill="#505050"/>
<rect x="628" y="168" width="10" height="1" fill="#FFFFFF"/>
<rect x="628.5" y="202.5" width="9.5" height="1" fill="#404040"/>
<text x="0" y="0" font-size="6.6" fill="#000" stroke="#000" stroke-width="0.2" transform="translate(636.3 192.5) rotate(-90)" textLength="20.0" lengthAdjust="spacingAndGlyphs">Internet</text>
<rect x="639" y="54" width="1" height="150" fill="#404040"/>
<rect x="629.5" y="86" width="7" height="6.5" fill="#E8E0D0" />
<rect x="629.5" y="87" width="2.5" height="5.5" fill="#2040B0" />
<rect x="632" y="86" width="2.5" height="6.5" fill="#F0C000" />
<rect x="634.5" y="87.5" width="2" height="5" fill="#C02020" />
<path d="M630 127.5l2 -2.5 1.5 1.5 2.5 -4" stroke="#2030C0" fill="none" stroke-width="1.3" />
<path d="M630.5 158v7l1.8 -1.5 1.8 2.5 1 -0.7 -1.5 -2.3 2.4 0z" stroke="none" fill="#000" stroke-width="1" />
<circle cx="633" cy="197" r="3.9" fill="#1838A0"/><circle cx="632" cy="196" r="1.7" fill="#4C8C60"/>
<circle cx="632.5" cy="215" r="3" fill="#fff" stroke="#444" stroke-width="0.8"/>
<path d="M630 212.2l1.5 0.8" stroke="#B04848" fill="none" stroke-width="0.9" />
<path d="M630 226.5h6M633 223.5v6M631 224.5l4 4M635 224.5l-4 4" stroke="#A8A4A0" fill="none" stroke-width="0.6" />
<path d="M635.5 223.5l1 -0.8" stroke="#C05050" fill="none" stroke-width="0.7" />
<path d="M629.5 240h7" stroke="#505050" fill="none" stroke-width="0.8" />
<rect x="632.5" y="239" width="2" height="2" fill="#303030" />
<path d="M630 250l5 -3.2M630 250l5 3.2" stroke="#505050" fill="none" stroke-width="0.8" />
<circle cx="633" cy="261" r="3" fill="none" stroke="#484848" stroke-width="0.8"/>
<path d="M632 261.5q1 -2 2 0" stroke="#A04040" fill="none" stroke-width="0.6" />
<circle cx="633" cy="272" r="3.4" fill="none" stroke="#604848" stroke-width="0.8"/>
<path d="M629.6 272h6.8M633 268.6v6.8" stroke="#604848" fill="none" stroke-width="0.6" />
<path d="M630 278.5l6 6.5M636 278.5l-6 6.5" stroke="#505050" fill="none" stroke-width="0.8" />
<rect x="630" y="288" width="0.8" height="0.8" fill="#A09090" />
<rect x="630" y="290" width="0.8" height="0.8" fill="#A09090" />
<rect x="630" y="292" width="0.8" height="0.8" fill="#A09090" />
<rect x="630" y="294" width="0.8" height="0.8" fill="#A09090" />
<rect x="632" y="288" width="0.8" height="0.8" fill="#A09090" />
<rect x="632" y="290" width="0.8" height="0.8" fill="#A09090" />
<rect x="632" y="292" width="0.8" height="0.8" fill="#A09090" />
<rect x="632" y="294" width="0.8" height="0.8" fill="#A09090" />
<rect x="634" y="288" width="0.8" height="0.8" fill="#A09090" />
<rect x="634" y="290" width="0.8" height="0.8" fill="#A09090" />
<rect x="634" y="292" width="0.8" height="0.8" fill="#A09090" />
<rect x="634" y="294" width="0.8" height="0.8" fill="#A09090" />
<rect x="636" y="288" width="0.8" height="0.8" fill="#A09090" />
<rect x="636" y="290" width="0.8" height="0.8" fill="#A09090" />
<rect x="636" y="292" width="0.8" height="0.8" fill="#A09090" />
<rect x="636" y="294" width="0.8" height="0.8" fill="#A09090" />
<path d="M630.5 307.5l4 -4" stroke="#C08080" fill="none" stroke-width="0.9" />
<rect x="632" y="305" width="2" height="2" fill="#806060" />
<rect x="628" y="313" width="10" height="1" fill="#808080"/>
<rect x="628" y="314" width="10" height="1" fill="#FFFFFF"/>
<path d="M631 321.5v-3q2 -2.5 4 0v3" stroke="#111" fill="none" stroke-width="1.4" />
<path d="M630.5 323h5" stroke="#C05050" fill="none" stroke-width="0.7" />
<path d="M630.5 326.5h3M632 326.5v6M634.5 327v5M633.5 328l1 -1 1 1M633.5 331l1 1 1 -1" stroke="#905050" fill="none" stroke-width="0.7" />
<path d="M630.5 344l2.5 -6 2.5 6M631.5 342h3" stroke="#C05050" fill="none" stroke-width="0.8" />
<rect x="627" y="350" width="13" height="1" fill="#909090"/>
<rect x="13" y="45" width="1" height="308" fill="#C4C0B8"/>
<path d="M4.2 51.5v6.2l1.4 -1.2 1.3 2.2 0.9 -0.5 -1.2 -2.1 1.9 -0.1z" stroke="#303030" fill="#fff" stroke-width="0.6" />
<path d="M11.5 58v3h-3z" stroke="none" fill="#D8D050" stroke-width="1" />
<path d="M11.5 58v3h-3" stroke="#505030" fill="none" stroke-width="0.5" />
<path d="M3.5 66.5q0 -4 3 -4q3 0 2.5 3q-0.5 3 -2 4" stroke="#A8A8D8" fill="none" stroke-width="0.8" />
<rect x="2.4" y="65.39999999999999" width="1.8" height="1.8" fill="#4848B8" />
<rect x="5.6" y="61.7" width="1.8" height="1.8" fill="#4848B8" />
<rect x="8.1" y="64.1" width="1.8" height="1.8" fill="#4848B8" />
<rect x="6.1" y="68.3" width="1.8" height="1.8" fill="#4848B8" />
<path d="M12 69v3h-3z" stroke="none" fill="#D8D050" stroke-width="1" />
<path d="M12 69v3h-3" stroke="#505030" fill="none" stroke-width="0.5" />
<path d="M3 77q1.5 -5 3.5 -5q2 0 3 4" stroke="#A8A8D8" fill="none" stroke-width="0.8" />
<rect x="2.2" y="76.0" width="1.6" height="1.6" fill="#4848B8" />
<rect x="4.7" y="72.0" width="1.6" height="1.6" fill="#4848B8" />
<rect x="7.2" y="73.2" width="1.6" height="1.6" fill="#4848B8" />
<rect x="8.7" y="75.7" width="1.6" height="1.6" fill="#4848B8" />
<rect x="5.7" y="76.7" width="1.6" height="1.6" fill="#4848B8" />
<circle cx="6.3" cy="85.7" r="3.4" fill="none" stroke="#404040" stroke-width="0.7"/>
<rect x="5.3" y="84.8" width="1.8" height="1.8" fill="#5050B8" />
<rect x="8.2" y="84.8" width="1.2" height="1.2" fill="#8080C8" />
<path d="M12 89v3h-3z" stroke="none" fill="#D8D050" stroke-width="1" />
<path d="M12 89v3h-3" stroke="#505030" fill="none" stroke-width="0.5" />
<path d="M3.5 100.5v-3q0 -3.5 3 -3.5q3 0 3 2.5" stroke="#4848B0" fill="none" stroke-width="0.8" />
<rect x="2.8" y="99.3" width="1.6" height="1.6" fill="#4848B8" />
<rect x="8.8" y="95.5" width="1.6" height="1.6" fill="#4848B8" />
<path d="M12.5 99.5v3h-3z" stroke="none" fill="#D8D050" stroke-width="1" />
<path d="M12.5 99.5v3h-3" stroke="#505030" fill="none" stroke-width="0.5" />
<path d="M4 111.5l1 -6.5q2.5 -1 4.5 0l1 6.5" stroke="#3030B0" fill="none" stroke-width="0.8" />
<rect x="3.2" y="110.7" width="1.6" height="1.6" fill="#3030B0" />
<rect x="4.2" y="104.2" width="1.6" height="1.6" fill="#3030B0" />
<rect x="8.7" y="104.2" width="1.6" height="1.6" fill="#3030B0" />
<rect x="9.7" y="110.7" width="1.6" height="1.6" fill="#3030B0" />
<path d="M2.5 117.5q0 -3 3.5 -3h2q2 0 2 2.5v2q0 2 -2 2h-3q-2.5 0 -2.5 -3.5z" stroke="none" fill="#808080" stroke-width="1" />
<path d="M5 116.8l1.6 0.5 -1 1.3z" stroke="none" fill="#F0F0F0" stroke-width="1" />
<path d="M6.5 124.5v7M3 128.5h7" stroke="#303030" fill="none" stroke-width="1" />
<rect x="5.5" y="124.5" width="2" height="1" fill="#606060" />
<rect x="9" y="127.5" width="1" height="2" fill="#606060" />
<path d="M12 131v3h-3z" stroke="none" fill="#D8D050" stroke-width="1" />
<path d="M12 131v3h-3" stroke="#505030" fill="none" stroke-width="0.5" />
<path d="M2.8 142.2l3.4 -6.6 3.4 6.6M4 139.8h4.4" stroke="#101010" fill="none" stroke-width="1.2" />
<rect x="1" y="145" width="10" height="1" fill="#A8A49C"/>
<rect x="1" y="146" width="10" height="1" fill="#ECEAE6"/>
<path d="M4 155l6 -6M5 150l4 4" stroke="#C0A0A0" fill="none" stroke-width="0.7" />
<path d="M4.5 165l5 -7" stroke="#444" fill="none" stroke-width="0.7" />
<circle cx="6" cy="162" r="1.5" fill="#5050B0"/>
<path d="M4 176l3 -3 3.5 -1 0.5 -3" stroke="#333" fill="none" stroke-width="0.7" />
<rect x="3.3" y="175.3" width="1.4" height="1.4" fill="#3030B0" />
<rect x="6.3" y="172.3" width="1.4" height="1.4" fill="#3030B0" />
<rect x="9.8" y="171.3" width="1.4" height="1.4" fill="#3030B0" />
<rect x="10.3" y="168.3" width="1.4" height="1.4" fill="#3030B0" />
<path d="M5 180v6h6" stroke="#333" fill="none" stroke-width="0.8" />
<rect x="1" y="190" width="10" height="1" fill="#A8A49C"/>
<rect x="1" y="191" width="10" height="1" fill="#ECEAE6"/>
<path d="M2.5 194.5h4.5v4h-4.5zM5 197h5v4h-5z" stroke="#404040" fill="none" stroke-width="0.7" stroke-dasharray="1.2 0.6"/>
<path d="M2.5 204.5h4v4h-4zM5.5 207h4.5v4.5h-4.5z" stroke="#505050" fill="none" stroke-width="0.7" stroke-dasharray="1 0.8"/>
<rect x="1" y="214" width="10" height="1" fill="#A8A49C"/>
<rect x="1" y="215" width="10" height="1" fill="#ECEAE6"/>
<path d="M6 217v7h4" stroke="#B0B0B0" fill="none" stroke-width="0.8" />
<path d="M4 228h7v6h-7z" stroke="#909090" fill="none" stroke-width="0.7" />
<rect x="5" y="229" width="2" height="4" fill="#A0A0A0" />
<path d="M7.5 238l3.5 3 -3.5 3 -3.5 -3z" stroke="#A0A0A0" fill="none" stroke-width="0.7" />
<rect x="0" y="251" width="13" height="1" fill="#B0ACA4"/>
<rect x="0" y="252" width="13" height="1" fill="#F4F2EE"/>
<rect x="22" y="353" width="593" height="1" fill="#E8E6E2"/>
<rect x="0" y="353" width="22" height="1" fill="#E4E2DC"/>
<rect x="2" y="355" width="1" height="12" fill="#9A9890"/>
<rect x="3" y="355" width="1" height="12" fill="#EEEEEA"/>
<rect x="4" y="355" width="1" height="12" fill="#9A9890"/>
<rect x="5" y="355" width="1" height="12" fill="#EEEEEA"/>
<path d="M8.8 359.8l5.2 5.2M14 359.8l-5.2 5.2" stroke="#6A6A6A" fill="none" stroke-width="1.6" />
<rect x="19" y="359" width="8" height="7" fill="#38387A" />
<rect x="20" y="360.5" width="6" height="4.5" fill="#C8C8E8" />
<rect x="21" y="360.5" width="1" height="4.5" fill="#38387A"/>
<rect x="23" y="360.5" width="1" height="4.5" fill="#38387A"/>
<rect x="25" y="360.5" width="1" height="4.5" fill="#38387A"/>
<rect x="0" y="368" width="640" height="1" fill="#A8A49C"/>
<rect x="0" y="369.5" width="640" height="1" fill="#F2F1EC"/>
<rect x="4" y="370" width="448" height="11.5" fill="#D4D0C8" />
<rect x="4" y="370" width="448" height="1" fill="#808080"/>
<rect x="4" y="370" width="1" height="11.5" fill="#808080"/>
<rect x="4" y="380.5" width="448" height="1" fill="#FFFFFF"/>
<rect x="451" y="370" width="1" height="11.5" fill="#FFFFFF"/>
<text x="5" y="378.9" font-size="6.3" fill="#000" font-weight="normal" textLength="43" lengthAdjust="spacingAndGlyphs" stroke="#000" stroke-width="0.08" >For Help, press F1</text>
<rect x="452" y="370" width="16" height="11.5" fill="#D4D0C8" />
<rect x="452" y="370" width="16" height="1" fill="#808080"/>
<rect x="452" y="370" width="1" height="11.5" fill="#808080"/>
<rect x="452" y="380.5" width="16" height="1" fill="#FFFFFF"/>
<rect x="467" y="370" width="1" height="11.5" fill="#FFFFFF"/>
<text x="453.3" y="378.6" font-size="6" fill="#000" font-weight="normal" textLength="13" lengthAdjust="spacingAndGlyphs" stroke="#000" stroke-width="0.12" >SNAP</text>
<rect x="469" y="370" width="13" height="11.5" fill="#D4D0C8" />
<rect x="469" y="370" width="13" height="1" fill="#808080"/>
<rect x="469" y="370" width="1" height="11.5" fill="#808080"/>
<rect x="469" y="380.5" width="13" height="1" fill="#FFFFFF"/>
<rect x="481" y="370" width="1" height="11.5" fill="#FFFFFF"/>
<text x="470.3" y="378.6" font-size="6" fill="#000" font-weight="normal" textLength="10" lengthAdjust="spacingAndGlyphs" stroke="#000" stroke-width="0.12" >GEO</text>
<rect x="481.5" y="370" width="53" height="11.5" fill="#D4D0C8" />
<rect x="481.5" y="370" width="53.0" height="1" fill="#808080"/>
<rect x="481.5" y="370" width="1" height="11.5" fill="#808080"/>
<rect x="481.5" y="380.5" width="53.0" height="1" fill="#FFFFFF"/>
<rect x="533.5" y="370" width="1" height="11.5" fill="#FFFFFF"/>
<rect x="535" y="370" width="47" height="11.5" fill="#D4D0C8" />
<rect x="535" y="370" width="47" height="1" fill="#808080"/>
<rect x="535" y="370" width="1" height="11.5" fill="#808080"/>
<rect x="535" y="380.5" width="47" height="1" fill="#FFFFFF"/>
<rect x="581" y="370" width="1" height="11.5" fill="#FFFFFF"/>
<rect x="583.5" y="370" width="28.5" height="11.5" fill="#D4D0C8" />
<rect x="583.5" y="370" width="28.5" height="1" fill="#808080"/>
<rect x="583.5" y="370" width="1" height="11.5" fill="#808080"/>
<rect x="583.5" y="380.5" width="28.5" height="1" fill="#FFFFFF"/>
<rect x="611.0" y="370" width="1" height="11.5" fill="#FFFFFF"/>
<text x="586" y="378.6" font-size="6" fill="#000" font-weight="normal" textLength="11" lengthAdjust="spacingAndGlyphs" stroke="#000" stroke-width="0.12" >18%</text>
<rect x="612" y="370" width="28" height="11.5" fill="#D4D0C8" />
<rect x="612" y="370" width="28" height="1" fill="#808080"/>
<rect x="612" y="370" width="1" height="11.5" fill="#808080"/>
<rect x="612" y="380.5" width="28" height="1" fill="#FFFFFF"/>
<rect x="639" y="370" width="1" height="11.5" fill="#FFFFFF"/>
<text x="615.3" y="378.6" font-size="6" fill="#000" font-weight="normal" textLength="11.3" lengthAdjust="spacingAndGlyphs" stroke="#000" stroke-width="0.12" >9.32</text>
<rect x="496" y="371.5" width="38" height="9" fill="#fff" />
<path d="M496 371.5h37.5v9h-37.5z" stroke="#404040" fill="none" stroke-width="0.7" />
<text x="497" y="378.6" font-size="6" fill="#000" font-weight="normal" textLength="20.8" lengthAdjust="spacingAndGlyphs" stroke="#000" stroke-width="0.12" >-23,78 in</text>
<rect x="543.5" y="371.5" width="37.5" height="9" fill="#fff" />
<path d="M543.5 371.5h37.5v9h-37.5z" stroke="#404040" fill="none" stroke-width="0.7" />
<text x="544.8" y="378.6" font-size="6" fill="#000" font-weight="normal" textLength="19" lengthAdjust="spacingAndGlyphs" stroke="#000" stroke-width="0.12" >38,52 in</text>
<path d="M491.5 372.5h2.5v3l-1.2 1.5 -1.3 -1.5zM490.5 378.5l1.5 -1 1.5 1" stroke="#333" fill="none" stroke-width="0.6" />
<path d="M539 372.5h2.5v3l-1.2 1.5 -1.3 -1.5zM540.3 377v3" stroke="#333" fill="none" stroke-width="0.6" />
<rect x="0" y="382" width="640" height="18" fill="#D4D0C8" />
<rect x="0" y="382" width="640" height="1" fill="#E0DED8"/>
<rect x="0" y="383" width="640" height="1" fill="#F6F5F2"/>
<rect x="1" y="384" width="26" height="11" fill="#D4D0C8" />
<rect x="1" y="384" width="26" height="1" fill="#FFFFFF"/>
<rect x="1" y="384" width="1" height="11" fill="#FFFFFF"/>
<rect x="1" y="394" width="26" height="1" fill="#5C5C5C"/>
<rect x="26" y="384" width="1" height="11" fill="#5C5C5C"/>
<rect x="2.5" y="385.5" width="3.3" height="3.3" fill="#D88040" />
<rect x="5.8" y="385.8" width="3.3" height="3.3" fill="#88B848" />
<rect x="2.5" y="388.8" width="3.3" height="3.3" fill="#7070C8" />
<rect x="5.8" y="389.1" width="3.3" height="3.3" fill="#D0C840" />
<text x="10.8" y="391.9" font-size="6.3" fill="#000" font-weight="bold" textLength="14" lengthAdjust="spacingAndGlyphs" >Start</text>
<rect x="31.5" y="387.5" width="6.5" height="7" fill="#2A4070" />
<rect x="32.3" y="388.3" width="4.9" height="5.4" fill="#D8ECF8" />
<path d="M33.3 389v4M33.3 389h1.8q1 0.2 0 1.9h-1.8M35.1 390.9q1.2 0.3 0 2.1h-1.8" stroke="#2A5090" fill="none" stroke-width="0.7" />
<rect x="37.8" y="389.5" width="0.8" height="3" fill="#2A4070" />
<circle cx="47.4" cy="391.5" r="3.1" fill="#1F7FB8"/><circle cx="47.4" cy="391.5" r="1.4" fill="#B8E0F0"/>
<path d="M45 391.3h4.8" stroke="#1F7FB8" fill="none" stroke-width="0.7" />
<path d="M44.3 393.8q-1 -3.5 2 -5" stroke="#D8C850" fill="none" stroke-width="0.6" />
<rect x="55" y="388" width="6" height="6.5" fill="#F8F8F8" />
<path d="M55 388h6v6.5h-6z" stroke="#90A8A0" fill="none" stroke-width="0.5" />
<circle cx="57.8" cy="391.4" r="1.9" fill="#207870"/>
<rect x="56.5" y="391.2" width="2.8" height="0.6" fill="#E0F0F0" />
<path d="M68 386.4l1.6 1.3 -1.6 1.3M70.2 386.4l1.6 1.3 -1.6 1.3" stroke="#000" fill="none" stroke-width="0.8" />
<rect x="73.5" y="384" width="56.0" height="11" fill="#D4D0C8" />
<rect x="73.5" y="384" width="56.0" height="1" fill="#FFFFFF"/>
<rect x="73.5" y="384" width="1" height="11" fill="#FFFFFF"/>
<rect x="73.5" y="394" width="56.0" height="1" fill="#5C5C5C"/>
<rect x="128.5" y="384" width="1" height="11" fill="#5C5C5C"/>
<circle cx="79.5" cy="389.6" r="3.3" fill="#F0E0A0"/>
<path d="M77.5 388.6l2 2 2 -2" stroke="#B08020" fill="none" stroke-width="0.6" />
<text x="85.5" y="392" font-size="5.6" fill="#000" font-weight="normal" textLength="41" lengthAdjust="spacingAndGlyphs" stroke="#000" stroke-width="0.12" >Posta in arrivo ...</text>
<rect x="130.5" y="384" width="56.0" height="11" fill="#D4D0C8" />
<rect x="130.5" y="384" width="56.0" height="1" fill="#FFFFFF"/>
<rect x="130.5" y="384" width="1" height="11" fill="#FFFFFF"/>
<rect x="130.5" y="394" width="56.0" height="1" fill="#5C5C5C"/>
<rect x="185.5" y="384" width="1" height="11" fill="#5C5C5C"/>
<circle cx="136.5" cy="389.6" r="3" fill="#2080C0"/><circle cx="136.5" cy="389.6" r="1.4" fill="#C0E4F4"/>
<path d="M134.0 389.40000000000003h5" stroke="#2080C0" fill="none" stroke-width="0.7" />
<path d="M133.5 392.3q-0.8 -4 2.5 -5.5" stroke="#E0C840" fill="none" stroke-width="0.6" />
<text x="142.5" y="392" font-size="5.6" fill="#000" font-weight="normal" textLength="35" lengthAdjust="spacingAndGlyphs" stroke="#000" stroke-width="0.12" >2 Internet E...</text>
<path d="M180.5 389.5h3l-1.5 1.6z" stroke="none" fill="#000" stroke-width="1" />
<rect x="187.5" y="384" width="56.5" height="11" fill="#D4D0C8" />
<rect x="187.5" y="384" width="56.5" height="1" fill="#FFFFFF"/>
<rect x="187.5" y="384" width="1" height="11" fill="#FFFFFF"/>
<rect x="187.5" y="394" width="56.5" height="1" fill="#5C5C5C"/>
<rect x="243.0" y="384" width="1" height="11" fill="#5C5C5C"/>
<path d="M190.3 387.8h2.5l0.8 0.8h3.4v4h-6.7z" stroke="#A08020" fill="#F0D060" stroke-width="0.5" />
<text x="199.5" y="392" font-size="5.6" fill="#000" font-weight="normal" textLength="37" lengthAdjust="spacingAndGlyphs" stroke="#000" stroke-width="0.12" >2 Esplora ris ...</text>
<path d="M238 389.5h3l-1.5 1.6z" stroke="none" fill="#000" stroke-width="1" />
<rect x="245.5" y="384" width="54.5" height="11" fill="#D4D0C8" />
<rect x="245.5" y="384" width="54.5" height="1" fill="#FFFFFF"/>
<rect x="245.5" y="384" width="1" height="11" fill="#FFFFFF"/>
<rect x="245.5" y="394" width="54.5" height="1" fill="#5C5C5C"/>
<rect x="299.0" y="384" width="1" height="11" fill="#5C5C5C"/>
<ellipse cx="251.5" cy="389.6" rx="3.2" ry="2.8" fill="#5050B8"/><ellipse cx="251.0" cy="388.8" rx="1.5" ry="1" fill="#A8A8E8"/>
<text x="257.5" y="392" font-size="5.6" fill="#000" font-weight="normal" textLength="39" lengthAdjust="spacingAndGlyphs" stroke="#000" stroke-width="0.12" >DBViewer - On...</text>
<rect x="301.5" y="384" width="56.0" height="11" fill="#D4D0C8" />
<rect x="301.5" y="384" width="56.0" height="1" fill="#FFFFFF"/>
<rect x="301.5" y="384" width="1" height="11" fill="#FFFFFF"/>
<rect x="301.5" y="394" width="56.0" height="1" fill="#5C5C5C"/>
<rect x="356.5" y="384" width="1" height="11" fill="#5C5C5C"/>
<path d="M304.5 386.8h2v2.8l2.6 -2.8h2l-3 3.2 3.2 3.6h-2.2l-2.6 -3v3h-2z" stroke="none" fill="#D82020" stroke-width="1" />
<text x="313.5" y="392" font-size="5.6" fill="#000" font-weight="normal" textLength="40" lengthAdjust="spacingAndGlyphs" stroke="#000" stroke-width="0.12" >1% - Scansion...</text>
<rect x="359.5" y="384" width="55.5" height="11" fill="#E8E6E0" />
<rect x="359.5" y="384" width="55.5" height="1" fill="#808080"/>
<rect x="359.5" y="384" width="1" height="11" fill="#808080"/>
<rect x="359.5" y="394" width="55.5" height="1" fill="#FFFFFF"/>
<rect x="414.0" y="384" width="1" height="11" fill="#FFFFFF"/>
<rect x="360.5" y="385" width="53.5" height="1" fill="#5C5C5C"/>
<rect x="360.5" y="385" width="1" height="9" fill="#5C5C5C"/>
<rect x="362.0" y="386.3" width="7" height="7" fill="#B02030" />
<path d="M363.5 387.8h4M365.5 387.8v4.5" stroke="#fff" fill="none" stroke-width="1" />
<text x="371.5" y="392" font-size="5.6" fill="#000" font-weight="bold" textLength="41" lengthAdjust="spacingAndGlyphs" >TurboCAD 2D...</text>
<rect x="419.5" y="384.5" width="56" height="10" fill="#fff" />
<text x="421.3" y="392" font-size="6" fill="#A8A8A8" font-weight="normal" textLength="44" lengthAdjust="spacingAndGlyphs" >Search Desktop</text>
<rect x="475.5" y="384.5" width="12" height="10" fill="#E8ECF4" />
<circle cx="481.5" cy="388.8" r="2" fill="none" stroke="#4070C0" stroke-width="0.9"/>
<path d="M480 390.5l-2 2.2" stroke="#4070C0" fill="none" stroke-width="1" />
<rect x="492.5" y="384" width="147.5" height="11.5" fill="#D4D0C8" />
<rect x="492.5" y="384" width="147.5" height="1" fill="#808080"/>
<rect x="492.5" y="384" width="1" height="11.5" fill="#808080"/>
<rect x="492.5" y="394.5" width="147.5" height="1" fill="#FFFFFF"/>
<rect x="639.0" y="384" width="1" height="11.5" fill="#FFFFFF"/>
<path d="M497 388.8l-1.6 1.6 1.6 1.6M499.4 388.8l-1.6 1.6 1.6 1.6" stroke="#000" fill="none" stroke-width="0.8" />
<rect x="501.5" y="387" width="8.5" height="8" fill="#E08838" />
<rect x="502.5" y="388" width="6.5" height="6" fill="#F0A050" />
<text x="504" y="393.5" font-size="5" fill="#fff" font-weight="normal" stroke="#fff" stroke-width="0.12" >z</text>
<circle cx="515.5" cy="389.3" r="2.4" fill="#C8E8F8" stroke="#6090B0" stroke-width="0.6"/>
<path d="M513.5 391.3l-2.3 2.6" stroke="#303060" fill="none" stroke-width="1.2" />
<rect x="520.5" y="387.5" width="5" height="4" fill="#405068" />
<rect x="521.2" y="388.2" width="3.6" height="2.6" fill="#90A8C8" />
<rect x="522" y="392" width="4" height="1.5" fill="#606878" />
<path d="M525 391l2.5 3M527.5 391l-2.5 3" stroke="#C03040" fill="none" stroke-width="0.8" />
<path d="M529 387.5h3l2 3 2.5 -3h1v1l-3 4 2.5 3h-2l-3 -3.5v3.5h-3z" stroke="none" fill="#D02828" stroke-width="1" />
<path d="M533 393l1.5 1.5 2.5 -3" stroke="#E8D040" fill="none" stroke-width="0.9" />
<circle cx="541.3" cy="391" r="3.9" fill="#58B838"/>
<path d="M539.3 391l1.5 1.5 2.5 -2.7" stroke="#E8F8D0" fill="none" stroke-width="1" />
<circle cx="550" cy="391" r="3.9" fill="#F0E098" stroke="#D8C070" stroke-width="0.4"/>
<path d="M548 391.5q2 2 4 0" stroke="#A08030" fill="none" stroke-width="0.6" />
<ellipse cx="557.8" cy="391" rx="2.8" ry="4" fill="#3020A0"/>
<text x="556.6" y="393" font-size="4.5" fill="#C060C0" font-weight="normal" stroke="#C060C0" stroke-width="0.12" >$</text>
<circle cx="568.3" cy="391" r="3.6" fill="#E8E0F0" stroke="#6040A0" stroke-width="1"/>
<path d="M566.5 392.5q1.5 -3 3.5 -2.5" stroke="#8040C0" fill="none" stroke-width="0.8" />
<ellipse cx="577.5" cy="391" rx="4.4" ry="2.9" fill="#D82020"/>
<text x="574.6" y="392.9" font-size="4.2" fill="#fff" font-weight="bold" >ati</text>
<circle cx="587" cy="391.8" r="3" fill="#F4F4F4" stroke="#303030" stroke-width="0.9"/><circle cx="587" cy="391.8" r="0.9" fill="#303030"/>
<rect x="583.5" y="387" width="2" height="1.5" fill="#C02020" />
<rect x="593.3" y="386.8" width="4.5" height="8.2" fill="#202020" />
<rect x="594" y="387.5" width="3.1" height="6.8" fill="#38E038" />
<rect x="600.5" y="387.3" width="7" height="6" fill="#707070" />
<rect x="601.3" y="388" width="5.4" height="4.5" fill="#A8A8A8" />
<rect x="602" y="393.5" width="1" height="1.5" fill="#404040" />
<rect x="605.5" y="393.5" width="1" height="1.5" fill="#404040" />
<circle cx="612.5" cy="391" r="3" fill="#686868"/><circle cx="612.5" cy="391" r="1.6" fill="#909090"/>
<text x="621.8" y="393.8" font-size="6" fill="#000" font-weight="normal" textLength="11.3" lengthAdjust="spacingAndGlyphs" stroke="#000" stroke-width="0.12" >9:32</text>
</svg>
</body></html>
